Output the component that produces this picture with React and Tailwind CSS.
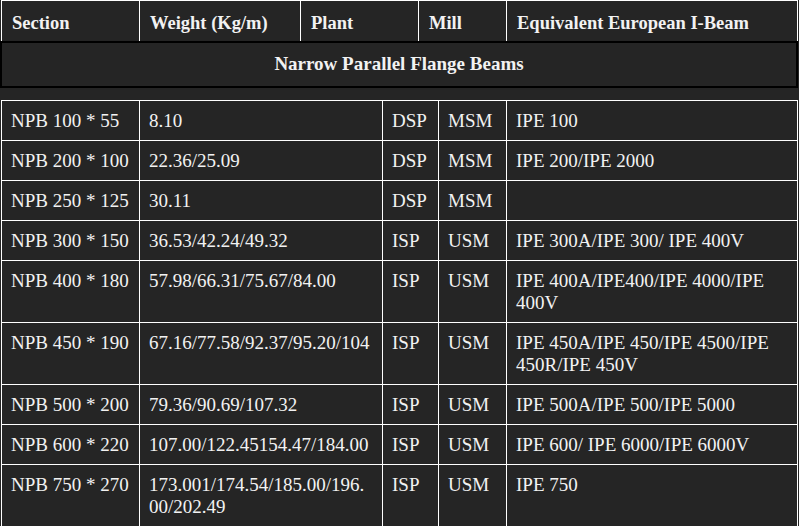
import React from 'react';

const headCols = [
  { label: 'Section', w: 'w-[138px]' },
  { label: 'Weight (Kg/m)', w: 'w-[161px]' },
  { label: 'Plant', w: 'w-[118px]' },
  { label: 'Mill', w: 'w-[88px]' },
  { label: 'Equivalent European I-Beam', w: 'w-[291px]' },
];

const bodyWidths = ['w-[138px]', 'w-[243px]', 'w-[56px]', 'w-[68px]', 'w-[291px]'];

const rows = [
  ['NPB 100 * 55', '8.10', 'DSP', 'MSM', 'IPE 100'],
  ['NPB 200 * 100', '22.36/25.09', 'DSP', 'MSM', 'IPE 200/IPE 2000'],
  ['NPB 250 * 125', '30.11', 'DSP', 'MSM', ''],
  ['NPB 300 * 150', '36.53/42.24/49.32', 'ISP', 'USM', 'IPE 300A/IPE 300/ IPE 400V'],
  ['NPB 400 * 180', '57.98/66.31/75.67/84.00', 'ISP', 'USM', 'IPE 400A/IPE400/IPE 4000/IPE 400V'],
  ['NPB 450 * 190', '67.16/77.58/92.37/95.20/104', 'ISP', 'USM', 'IPE 450A/IPE 450/IPE 4500/IPE 450R/IPE 450V'],
  ['NPB 500 * 200', '79.36/90.69/107.32', 'ISP', 'USM', 'IPE 500A/IPE 500/IPE 5000'],
  ['NPB 600 * 220', '107.00/122.45154.47/184.00', 'ISP', 'USM', 'IPE 600/ IPE 6000/IPE 6000V'],
  [
    'NPB 750 * 270',
    <>
      173.001/174.54/185.00/196.
      <br />
      00/202.49
    </>,
    'ISP',
    'USM',
    'IPE 750',
  ],
];

export default function App() {
  return (
    <div className="min-h-[526px] bg-[#252525] text-[#f2f2f2] font-[family-name:Liberation_Serif,Times_New_Roman,serif]">
      {/* header row */}
      <div className="ml-px w-[797px] flex border-t border-r border-white">
        {headCols.map((c) => (
          <div
            key={c.label}
            className={`${c.w} shrink-0 h-[40px] border-l border-white px-[10px] pt-[11px] text-[18.5px] leading-[22px] font-bold`}
          >
            {c.label}
          </div>
        ))}
      </div>

      {/* group title */}
      <div className="w-[798px] h-[47px] border-2 border-black flex items-center justify-center text-[19px] font-bold">
        Narrow Parallel Flange Beams
      </div>

      {/* body */}
      <div className="mt-[12px] ml-px w-[797px] border-r border-b border-white">
        {rows.map((r, i) => (
          <div key={i} className="flex border-t border-white">
            {r.map((cell, j) => (
              <div
                key={j}
                className={`${bodyWidths[j]} shrink-0 border-l border-white px-[9px] pt-[9px] pb-[8px] text-[19px] leading-[22px]`}
              >
                {cell}
              </div>
            ))}
          </div>
        ))}
      </div>
    </div>
  );
}
